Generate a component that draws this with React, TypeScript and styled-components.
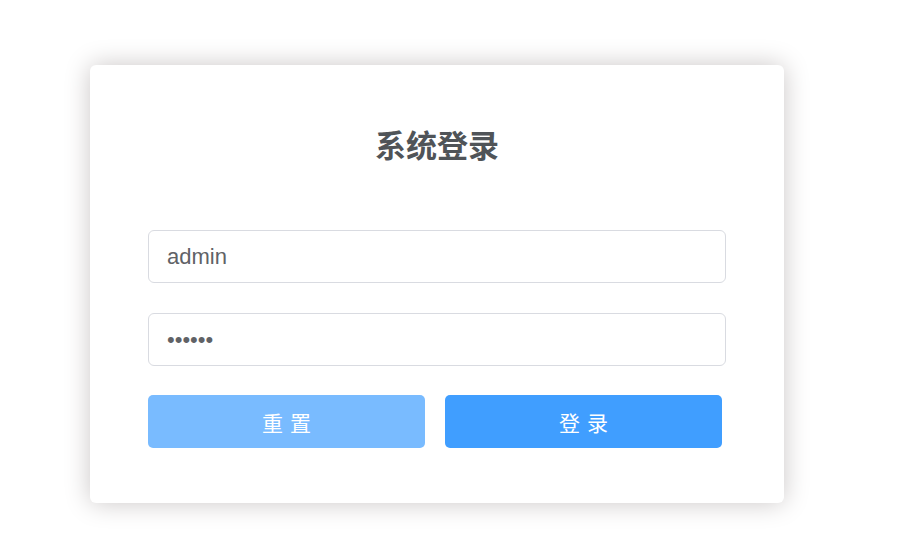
import React, { useState } from 'react';
import styled, { createGlobalStyle } from 'styled-components';

const GlobalStyle = createGlobalStyle`
  html, body {
    margin: 0;
    padding: 0;
    background: #fff;
  }
  body {
    font-family: "Liberation Sans", "Noto Sans CJK SC", sans-serif;
  }
`;

const Page = styled.div`
  width: 909px;
  height: 550px;
  padding: 65px 0 0 90px;
  box-sizing: border-box;
`;

const Card = styled.form`
  width: 694px;
  height: 438px;
  box-sizing: border-box;
  padding: 63px 58px 0;
  background: #fff;
  border-radius: 6px;
  box-shadow: 0 0 26px #cac6c6;
  display: flex;
  flex-direction: column;
`;

const Title = styled.h3`
  margin: 0 0 71px;
  font-size: 31px;
  line-height: 31px;
  font-weight: bold;
  color: #505458;
  text-align: center;
  font-family: "Noto Sans CJK SC", sans-serif;
`;

const Field = styled.input<{ $gap: number }>`
  display: block;
  width: 100%;
  height: 53px;
  box-sizing: border-box;
  margin-bottom: ${({ $gap }) => $gap}px;
  padding: 0 18px;
  border: 1px solid #d9dbe1;
  border-radius: 6px;
  font-family: "Liberation Sans", Arial, sans-serif;
  font-size: 22px;
  color: #606266;
  outline: none;
  background: #fff;
`;

const Buttons = styled.div`
  display: flex;
  gap: 20px;
`;

const Button = styled.button<{ $primary?: boolean }>`
  width: 277px;
  height: 53px;
  border: none;
  border-radius: 5px;
  background: ${({ $primary }) => ($primary ? '#409eff' : '#79bbff')};
  color: #fff;
  font-family: "Noto Sans CJK SC", sans-serif;
  font-size: 21px;
  font-weight: normal;
  letter-spacing: 7px;
  text-indent: 7px;
  cursor: pointer;
`;

const App = () => {
  const [user, setUser] = useState('admin');
  const [pass, setPass] = useState('123456');

  return (
    <Page>
      <GlobalStyle />
      <Card onSubmit={(e) => e.preventDefault()}>
        <Title>系统登录</Title>
        <Field $gap={30} value={user} onChange={(e) => setUser(e.target.value)} />
        <Field $gap={29} type="password" value={pass} onChange={(e) => setPass(e.target.value)} />
        <Buttons>
          <Button type="button" onClick={() => { setUser(''); setPass(''); }}>重置</Button>
          <Button type="submit" $primary>登录</Button>
        </Buttons>
      </Card>
    </Page>
  );
};

export default App;
